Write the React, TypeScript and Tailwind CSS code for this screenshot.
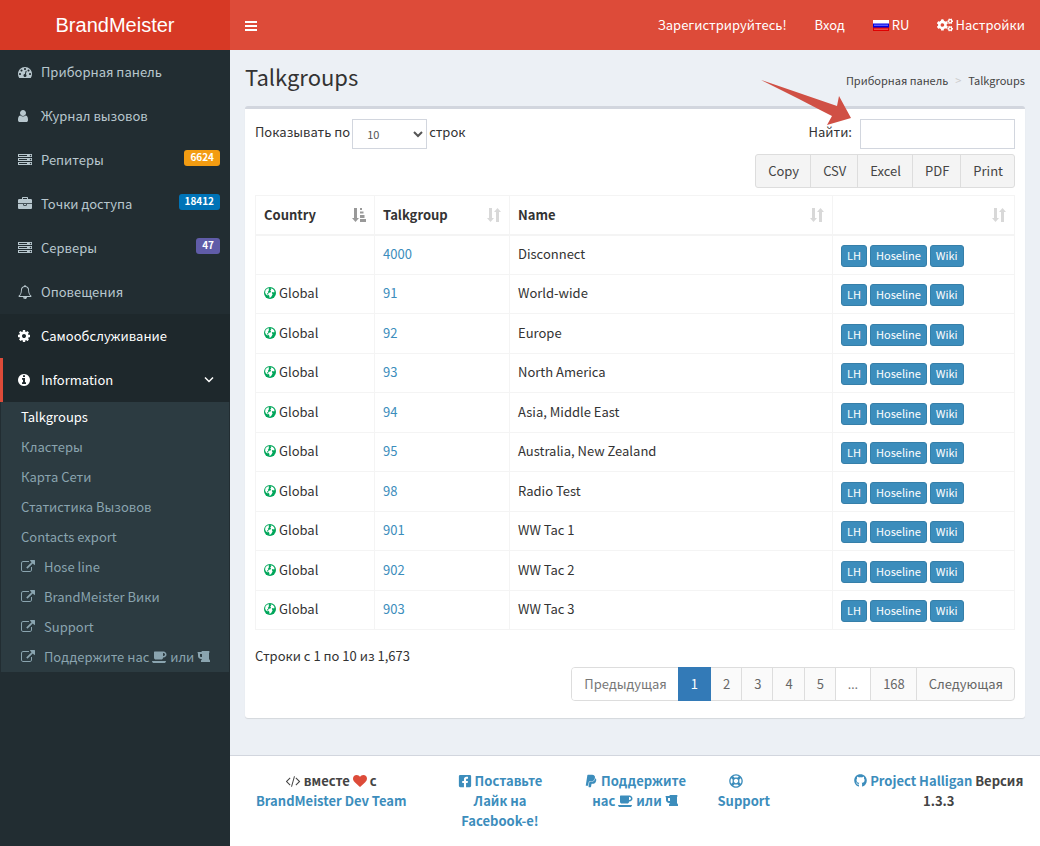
import { useState, type ReactNode } from "react";
import { FaCogs, FaFacebookSquare, FaGithub, FaPaypal, FaRegLifeRing } from "react-icons/fa";

const paths = {
  dashboard:
    "M384 1152q0-53-37.5-90.5t-90.5-37.5-90.5 37.5-37.5 90.5 37.5 90.5 90.5 37.5 90.5-37.5 37.5-90.5zm192-448q0-53-37.5-90.5t-90.5-37.5-90.5 37.5-37.5 90.5 37.5 90.5 90.5 37.5 90.5-37.5 37.5-90.5zm428 481l101-382q6-26-7.5-48.5t-38.5-29.5-48 6.5-30 39.5l-101 382q-60 5-107 43.5t-63 98.5q-20 77 20 146t117 89 146-20 89-117q16-60-6-117t-72-91zm660-33q0-53-37.5-90.5t-90.5-37.5-90.5 37.5-37.5 90.5 37.5 90.5 90.5 37.5 90.5-37.5 37.5-90.5zm-640-640q0-53-37.5-90.5t-90.5-37.5-90.5 37.5-37.5 90.5 37.5 90.5 90.5 37.5 90.5-37.5 37.5-90.5zm448 192q0-53-37.5-90.5t-90.5-37.5-90.5 37.5-37.5 90.5 37.5 90.5 90.5 37.5 90.5-37.5 37.5-90.5zm320 448q0 261-141 483-19 29-54 29h-1402q-35 0-54-29-141-221-141-483 0-182 71-348t191-286 286-191 348-71 348 71 286 191 191 286 71 348z",
  user:
    "M1280 1399q0 109-62.5 187t-150.5 78h-854q-88 0-150.5-78t-62.5-187q0-85 8.5-160.5t31.5-152 58.5-131 94-89 134.5-34.5q131 128 313 128t313-128q76 0 134.5 34.5t94 89 58.5 131 31.5 152 8.5 160.5zm-256-887q0 159-112.5 271.5t-271.5 112.5-271.5-112.5-112.5-271.5 112.5-271.5 271.5-112.5 271.5 112.5 112.5 271.5z",
  server:
    "M128 1408h1024v-128h-1024v128zm0-512h1024v-128h-1024v128zm1568 448q0-40-28-68t-68-28-68 28-28 68 28 68 68 28 68-28 28-68zm-1568-960h1024v-128h-1024v128zm1568 448q0-40-28-68t-68-28-68 28-28 68 28 68 68 28 68-28 28-68zm0-512q0-40-28-68t-68-28-68 28-28 68 28 68 68 28 68-28 28-68zm96 832v384h-1792v-384h1792zm0-512v384h-1792v-384h1792zm0-512v384h-1792v-384h1792z",
  briefcase:
    "M640 256h512v-128h-512v128zm1152 640v480q0 66-47 113t-113 47h-1472q-66 0-113-47t-47-113v-480h672v160q0 26 19 45t45 19h320q26 0 45-19t19-45v-160h672zm-768 0v128h-256v-128h256zm768-480v384h-1792v-384q0-66 47-113t113-47h352v-160q0-40 28-68t68-28h576q40 0 68 28t28 68v160h352q66 0 113 47t47 113z",
  bell:
    "M912 1696q0-16-16-16-59 0-101.5-42.5t-42.5-101.5q0-16-16-16t-16 16q0 73 51.5 124.5t124.5 51.5q16 0 16-16zm-666-288h1300q-266-300-266-832 0-51-24-105t-69-103-121.5-80.5-169.5-31.5-169.5 31.5-121.5 80.5-69 103-24 105q0 532-266 832zm1482 0q0 52-38 90t-90 38h-448q0 106-75 181t-181 75-181-75-75-181h-448q-52 0-90-38t-38-90q50-42 91-88t85-119.5 74.5-158.5 50-206 19.5-260q0-152 117-282.5t307-158.5q-8-19-8-39 0-40 28-68t68-28 68 28 28 68q0 20-8 39 190 28 307 158.5t117 282.5q0 139 19.5 260t50 206 74.5 158.5 85 119.5 91 88z",
  cog:
    "M1024 896q0-106-75-181t-181-75-181 75-75 181 75 181 181 75 181-75 75-181zm512-109v222q0 12-8 23t-20 13l-185 28q-19 54-39 91 35 50 107 138 10 12 10 25t-9 23q-27 37-99 108t-94 71q-12 0-26-9l-138-108q-44 23-91 38-16 136-29 186-7 28-36 28h-222q-14 0-24.5-8.5t-11.5-21.5l-28-184q-49-16-90-37l-141 107q-10 9-25 9-14 0-25-11-126-114-165-168-7-10-7-23 0-12 8-23 15-21 51-66.5t54-70.5q-27-50-41-99l-183-27q-13-2-21-12.5t-8-23.5v-222q0-12 8-23t19-13l186-28q14-46 39-92-40-57-107-138-10-12-10-24 0-10 9-23 26-36 98.5-107.5t94.5-71.5q13 0 26 10l138 107q44-23 91-38 16-136 29-186 7-28 36-28h222q14 0 24.5 8.5t11.5 21.5l28 184q49 16 90 37l142-107q9-9 24-9 13 0 25 10 129 119 165 170 7 8 7 22 0 12-8 23-15 21-51 66.5t-54 70.5q26 50 41 98l183 28q13 2 21 12.5t8 23.5z",
  info:
    "M1024 1376v-160q0-14-9-23t-23-9h-96v-512q0-14-9-23t-23-9h-320q-14 0-23 9t-9 23v160q0 14 9 23t23 9h96v320h-96q-14 0-23 9t-9 23v160q0 14 9 23t23 9h448q14 0 23-9t9-23zm-128-896v-160q0-14-9-23t-23-9h-192q-14 0-23 9t-9 23v160q0 14 9 23t23 9h192q14 0 23-9t9-23zm640 416q0 209-103 385.5t-279.5 279.5-385.5 103-385.5-103-279.5-279.5-103-385.5 103-385.5 279.5-279.5 385.5-103 385.5 103 279.5 279.5 103 385.5z",
  external:
    "M1408 928v320q0 119-84.5 203.5t-203.5 84.5h-832q-119 0-203.5-84.5t-84.5-203.5v-832q0-119 84.5-203.5t203.5-84.5h704q14 0 23 9t9 23v64q0 14-9 23t-23 9h-704q-66 0-113 47t-47 113v832q0 66 47 113t113 47h832q66 0 113-47t47-113v-320q0-14 9-23t23-9h64q14 0 23 9t9 23zm384-864v512q0 26-19 45t-45 19-45-19l-176-176-652 652q-10 10-23 10t-23-10l-114-114q-10-10-10-23t10-23l652-652-176-176q-19-19-19-45t19-45 45-19h512q26 0 45 19t19 45z",
  coffee:
    "M1664 576q0-80-56-136t-136-56h-64v384h64q80 0 136-56t56-136zm-1664 832h1792q0 106-75 181t-181 75h-1280q-106 0-181-75t-75-181zm1856-832q0 159-112.5 271.5t-271.5 112.5h-64v32q0 92-66 158t-158 66h-704q-92 0-158-66t-66-158v-736q0-26 19-45t45-19h1152q159 0 271.5 112.5t112.5 271.5z",
  beer:
    "M640 896v-384h-256v256q0 53 37.5 90.5t90.5 37.5h128zm1024 448v192h-1152v-192l128-192h-128q-159 0-271.5-112.5t-112.5-271.5v-320l-64-64 32-128h480l32-128h960l32 192-64 32v800z",
  heart:
    "M896 1664q-26 0-44-18l-624-602q-10-8-27.5-26t-55.5-65.5-68-97.5-53.5-121-23.5-138q0-220 127-344t351-124q62 0 126.5 21.5t120 58 95.5 68.5 76 68q36-36 76-68t95.5-68.5 120-58 126.5-21.5q224 0 351 124t127 344q0 221-229 450l-623 600q-18 18-44 18z",
  code:
    "M553 1399l-50 50q-10 10-23 10t-23-10l-466-466q-10-10-10-23t10-23l466-466q10-10 23-10t23 10l50 50q10 10 10 23t-10 23l-393 393 393 393q10 10 10 23t-10 23zm591-1067l-373 1291q-4 13-15.5 19.5t-23.5 2.5l-62-17q-13-4-19.5-15.5t-2.5-24.5l373-1291q4-13 15.5-19.5t23.5-2.5l62 17q13 4 19.5 15.5t2.5 24.5zm657 651l-466 466q-10 10-23 10t-23-10l-50-50q-10-10-10-23t10-23l393-393-393-393q-10-10-10-23t10-23l50-50q10-10 23-10t23 10l466 466q10 10 10 23t-10 23z",
  bars: "M0 256h1536v256h-1536zM0 768h1536v256h-1536zM0 1280h1536v256h-1536z",
};

// glyph widths on a 1792-high grid, 14px tall
function Icon({ name, width = 1792, className = "" }: { name: keyof typeof paths; width?: number; className?: string }) {
  return (
    <svg
      viewBox={`0 0 ${width} 1792`}
      width={width / 128}
      height={14}
      fill="currentColor"
      aria-hidden="true"
      className={`inline-block shrink-0 ${className}`}
    >
      <path d={paths[name]} />
    </svg>
  );
}

const Coffee = () => <Icon name="coffee" width={1920} className="align-[-2px]" />;
const Beer = () => <Icon name="beer" width={1664} className="align-[-2px]" />;

function Globe() {
  return (
    <svg viewBox="0 0 12 12" width="12" height="12" aria-hidden="true" className="shrink-0">
      <circle cx="6" cy="6" r="6" fill="#00a65a" />
      <path fill="#fff" d="M1.500 3.200L3 1.700l1.700-.5.6.8-.9 1 .6.7-1.200 1 .6 1.200-1 .2-.3 1.200.9.5-.2.8L2 7.500l-.9-1.900z" />
      <path fill="#fff" d="M6.600 1.300l2.300.8 1.600 2-.3 1.300-1.600-.5-.8.8.8 1.700-1.500 2.700-1.500.8-.3-2.200-1.500-1.500 1.200-1.500 1.500-.2.5-1.200-.8-.9 1-.9z" />
    </svg>
  );
}

function SortIcon({ active }: { active?: boolean }) {
  return (
    <svg viewBox="0 0 14 14" width="14" height="14" fill="currentColor" aria-hidden="true" className={active ? "text-[#999]" : "text-[#d8d8d8]"}>
      <path d="M2 0h3v10h2L3.500 14 0 10h2z" />
      {active ? <path d="M8 0h2v2H8zM8 3.500h3.500v2H8zM8 7h4.500v3H8zM8 11h6v3H8z" /> : <path d="M9 14h3V4h2L10.500 0 7 4h2z" />}
    </svg>
  );
}

const menu = [
  { icon: <Icon name="dashboard" />, text: "Приборная панель" },
  { icon: <Icon name="user" width={1280} />, text: "Журнал вызовов" },
  { icon: <Icon name="server" />, text: "Репитеры", badge: "6624", color: "bg-[#f39c12]" },
  { icon: <Icon name="briefcase" />, text: "Точки доступа", badge: "18412", color: "bg-[#0073b7]" },
  { icon: <Icon name="server" />, text: "Серверы", badge: "47", color: "bg-[#605ca8]" },
  { icon: <Icon name="bell" />, text: "Оповещения" },
];

const submenu: { text: ReactNode; ext?: boolean }[] = [
  { text: "Кластеры" },
  { text: "Карта Сети" },
  { text: "Статистика Вызовов" },
  { text: "Contacts export" },
  { text: "Hose line", ext: true },
  { text: "BrandMeister Вики", ext: true },
  { text: "Support", ext: true },
  { text: <>Поддержите нас <Coffee /> или <Beer /></>, ext: true },
];

const groups = [
  ["", "4000", "Disconnect"],
  ["Global", "91", "World-wide"],
  ["Global", "92", "Europe"],
  ["Global", "93", "North America"],
  ["Global", "94", "Asia, Middle East"],
  ["Global", "95", "Australia, New Zealand"],
  ["Global", "98", "Radio Test"],
  ["Global", "901", "WW Tac 1"],
  ["Global", "902", "WW Tac 2"],
  ["Global", "903", "WW Tac 3"],
];

function Sidebar() {
  return (
    <aside className="w-[230px] shrink-0 bg-[#222d32] text-[#b8c7ce]">
      <nav>
        {menu.map((m) => (
          <a key={m.text} href="#" className="flex h-11 items-center pl-[18px] pr-[10px]">
            <span className="flex w-[23px]">{m.icon}</span>
            <span>{m.text}</span>
            {m.badge && (
              <span className={`mb-1 ml-auto h-4 rounded-[3px] px-1.5 text-[10px] leading-[14px] font-bold text-white ${m.color}`}>
                {m.badge}
              </span>
            )}
          </a>
        ))}
        <a href="#" className="flex h-11 items-center bg-[#1e282c] pl-[18px] text-white">
          <span className="flex w-[23px]"><Icon name="cog" width={1536} /></span>
          Самообслуживание
        </a>
        <a href="#" className="flex h-11 items-center border-l-[3px] border-[#dd4b39] bg-[#1e282c] pl-[15px] pr-4 text-white">
          <span className="flex w-[23px]"><Icon name="info" width={1536} /></span>
          Information
          <svg viewBox="0 0 10 10" width="10" height="10" fill="none" stroke="currentColor" strokeWidth="1.500" className="ml-auto" aria-hidden="true">
            <path d="M1 2.500l4 4 4-4" />
          </svg>
        </a>
        <ul className="mx-px bg-[#2c3b41] text-[#8aa4af]">
          <li><a href="#" className="flex h-[30px] items-center pl-5 text-white">Talkgroups</a></li>
          {submenu.map((s, i) => (
            <li key={i}>
              <a href="#" className="flex h-[30px] items-center pl-5">
                {s.ext && <span className="flex w-[23px]"><Icon name="external" /></span>}
                <span>{s.text}</span>
              </a>
            </li>
          ))}
        </ul>
      </nav>
    </aside>
  );
}

function TalkgroupTable() {
  return (
    <table className="w-full table-fixed border-collapse border border-[#f4f4f4]">
      <colgroup>
        <col className="w-[119px]" />
        <col className="w-[135px]" />
        <col />
        <col className="w-[182px]" />
      </colgroup>
      <thead>
        <tr className="h-[39px] border-b-2 border-[#f4f4f4]">
          {["Country", "Talkgroup", "Name", ""].map((h, i) => (
            <th key={i} className="border-x border-[#f4f4f4] px-2 text-left font-bold">
              <div className="flex items-center justify-between">
                <span>{h}</span>
                <SortIcon active={i === 0} />
              </div>
            </th>
          ))}
        </tr>
      </thead>
      <tbody>
        {groups.map(([country, id, name]) => (
          <tr key={id} className="odd:h-10 even:h-[39px]">
            <td className="border border-[#f4f4f4] px-2 pb-0.5">
              {country && (
                <span className="flex items-center gap-[3px]">
                  <Globe />
                  {country}
                </span>
              )}
            </td>
            <td className="border border-[#f4f4f4] px-2 pb-0.5"><a href="#" className="text-[#3c8dbc]">{id}</a></td>
            <td className="border border-[#f4f4f4] px-2 pb-0.5">{name}</td>
            <td className="border border-[#f4f4f4] px-2 pt-0.5">
              <div className="flex gap-[3px] text-[11px] leading-5 text-white">
                {["LH", "Hoseline", "Wiki"].map((b) => (
                  <button key={b} className="rounded-[3px] border border-[#367fa9] bg-[#3c8dbc] px-[5px] pb-px leading-[19px]">{b}</button>
                ))}
              </div>
            </td>
          </tr>
        ))}
      </tbody>
    </table>
  );
}

export default function App() {
  const [size, setSize] = useState("10");
  const [query, setQuery] = useState("");

  return (
    <div className="flex min-h-screen flex-col bg-[#ecf0f5] font-['Noto_Sans_CJK_SC','Noto_Sans',sans-serif] text-[13px] leading-5 text-[#333]">
      <header className="flex h-[50px] bg-[#dd4b39] text-white">
        <a href="#" className="flex w-[230px] shrink-0 items-center justify-center bg-[#d73925] font-['Liberation_Sans',sans-serif] text-[20px]">
          BrandMeister
        </a>
        <button aria-label="Toggle navigation" className="px-[15px]"><Icon name="bars" width={1536} /></button>
        <nav className="ml-auto flex items-center gap-7 pr-[15px]">
          <a href="#">Зарегистрируйтесь!</a>
          <a href="#">Вход</a>
          <a href="#" className="flex items-center gap-[3px]">
            <svg width="16" height="11" viewBox="0 0 16 11" aria-hidden="true">
              <path fill="#fff" d="M0 0h16v4H0z" />
              <path fill="#0000e0" d="M0 3.500h16V8H0z" />
              <path fill="#5a5aff" d="M1 4.500h14V6H1z" />
              <path fill="#e00000" d="M0 7.500h16V11H0z" />
              <path fill="#f04848" d="M1 8.500h14V10H1z" />
            </svg>
            RU
          </a>
          <a href="#" className="flex items-center gap-0.5"><FaCogs size={16} />Настройки</a>
        </nav>
      </header>

      <div className="flex grow">
        <Sidebar />
        <div className="flex min-w-0 grow flex-col">
          <main className="relative grow px-[15px]">
            <div className="flex h-14 items-center justify-between">
              <h1 className="pb-1 text-[22px] leading-6">Talkgroups</h1>
              <ol className="flex gap-[7px] pt-1 text-[11px] text-[#444]">
                <li><a href="#">Приборная панель</a></li>
                <li className="text-[#ccc]">&gt;</li>
                <li>Talkgroups</li>
              </ol>
            </div>

            <section className="rounded-[3px] border-t-[3px] border-[#d2d6de] bg-white px-[10px] pt-[10px] pb-[17px] shadow-[0_1px_1px_rgba(0,0,0,0.1)]">
              <div className="flex items-start justify-between">
                <label className="flex gap-0.5 leading-[26px]">
                  Показывать по
                  <select
                    value={size}
                    onChange={(e) => setSize(e.target.value)}
                    className="h-[30px] w-[75px] border border-[#d2d6de] bg-white px-[10px] text-[11px] text-[#555]"
                  >
                    <option>10</option>
                    <option>25</option>
                    <option>50</option>
                    <option>100</option>
                  </select>
                  строк
                </label>
                <label className="flex gap-2 leading-[26px]">
                  Найти:
                  <input
                    type="search"
                    value={query}
                    onChange={(e) => setQuery(e.target.value)}
                    className="h-[30px] w-[155px] border border-[#d2d6de] bg-white px-[10px] text-[11px]"
                  />
                </label>
              </div>

              <div className="mt-[5px] mb-[7px] flex justify-end">
                <div className="flex divide-x divide-[#ddd] rounded-[3px] border border-[#ddd] bg-[#f4f4f4] text-[#444]">
                  {["Copy", "CSV", "Excel", "PDF", "Print"].map((b) => (
                    <button key={b} className="h-8 pr-[11px] pl-3">{b}</button>
                  ))}
                </div>
              </div>

              <TalkgroupTable />

              <p className="mt-4">Строки с 1 по 10 из 1,673</p>
              <nav className="mt-px flex justify-end">
                <div className="flex rounded-[4px] border border-[#ddd] bg-[#fafafa] text-[#666]">
                  <button className="h-8 rounded-l-[3px] bg-white pr-[11px] pl-3 text-[#777]">Предыдущая</button>
                  <button className="-my-px h-[34px] bg-[#337ab7] px-[13px] text-white">1</button>
                  {["2", "3", "4", "5"].map((p) => (
                    <button key={p} className="h-8 border-r border-[#ddd] pr-[11px] pl-3">{p}</button>
                  ))}
                  <span className="h-8 border-r border-[#ddd] bg-white px-3 font-['Noto_Sans',sans-serif] leading-8 text-[#777]">…</span>
                  <button className="h-8 border-r border-[#ddd] pr-[11px] pl-3">168</button>
                  <button className="h-8 pr-[11px] pl-3">Следующая</button>
                </div>
              </nav>
            </section>

            <svg className="pointer-events-none absolute top-[29px] right-[188px]" width="92" height="48" viewBox="760 79 92 48" aria-hidden="true">
              <path fill="#d05045" d="M761 80L837 106l2-10 12 22-24 7 5-9q-12-6-33-17z" />
            </svg>
          </main>

          <footer className="mt-9 grid grid-cols-12 border-t border-[#d2d6de] bg-white py-[15px] text-center font-bold text-[#444]">
            <div className="col-span-3 px-[15px]">
              <Icon name="code" width={1920} className="align-[-2px]" /> вместе <Icon name="heart" className="align-[-2px] text-[#dd4b39]" /> с<br />
              <a href="#" className="text-[#3c8dbc]">BrandMeister Dev Team</a>
            </div>
            <a href="#" className="col-span-2 px-[15px] text-[#3c8dbc]">
              <FaFacebookSquare size={14} className="inline align-[-2px]" /> Поставьте Лайк на Facebook-е!
            </a>
            <a href="#" className="col-span-2 px-[15px] text-[#3c8dbc]">
              <FaPaypal size={14} className="inline align-[-2px]" /> Поддержите нас <Coffee /> или <Beer />
            </a>
            <a href="#" className="px-[15px] text-[#3c8dbc]">
              <FaRegLifeRing size={14} className="inline align-[-2px]" /> Support
            </a>
            <div className="col-span-3 col-start-10 px-[15px]">
              <a href="#" className="text-[#3c8dbc]"><FaGithub size={13} className="inline align-[-1px]" /> Project Halligan</a> Версия 1.3.3
            </div>
          </footer>
        </div>
      </div>
    </div>
  );
}
